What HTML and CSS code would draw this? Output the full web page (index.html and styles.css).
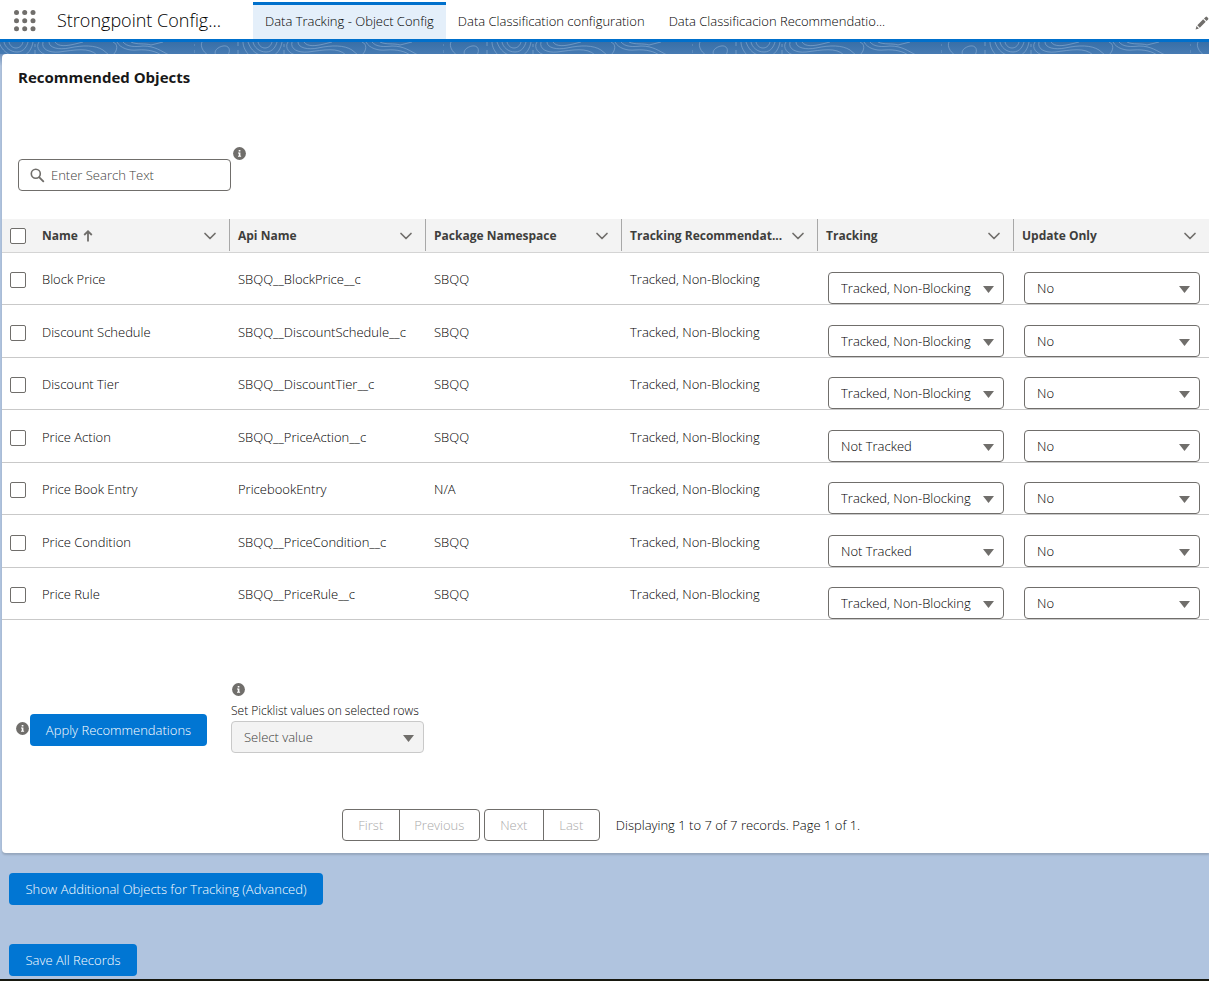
FILE: index.html
```html
<!DOCTYPE html>
<html lang="en">
<head>
<meta charset="utf-8">
<title>Strongpoint Configuration</title>
<link rel="stylesheet" href="styles.css">
</head>
<body>
<svg class="defs" aria-hidden="true">
  <symbol id="info" viewBox="0 0 13 13"><circle cx="6.500" cy="6.500" r="6.400" fill="#706e6b"/><path d="M5.700 3h1.700v1.500H5.700zM5 5.500h2.400v3.300h.7v1H5v-1h.8V6.400H5z" fill="#fff"/></symbol>
  <symbol id="chevron" viewBox="0 0 14 14"><path d="M2 4.500l5 5 5-5" fill="none" stroke="#706e6b" stroke-width="1.700" stroke-linecap="round" stroke-linejoin="round"/></symbol>
</svg>
<header class="topbar">
  <button class="launcher" type="button" aria-label="App Launcher">
    <svg width="22" height="22" viewBox="0 0 22 22" fill="#706e6b"><circle cx="2.500" cy="2.500" r="2.500"/><circle cx="10.700" cy="2.500" r="2.500"/><circle cx="19" cy="2.500" r="2.500"/><circle cx="2.500" cy="10.700" r="2.500"/><circle cx="10.700" cy="10.700" r="2.500"/><circle cx="19" cy="10.700" r="2.500"/><circle cx="2.500" cy="18.700" r="2.500"/><circle cx="10.700" cy="18.700" r="2.500"/><circle cx="19" cy="18.700" r="2.500"/></svg>
  </button>
  <div class="app-name">Strongpoint Config...</div>
  <nav class="tabs">
    <a class="tab active" href="#">Data Tracking - Object Config</a>
    <a class="tab" href="#">Data Classification configuration</a>
    <a class="tab" href="#">Data Classificacion Recommendatio...</a>
  </nav>
  <button class="edit" type="button" aria-label="Edit navigation">
    <svg width="14" height="14" viewBox="0 0 14 14" fill="#706e6b"><path d="M.6 13.400l.9-3.300 2.400 2.400zM2.300 9.200l5.900-5.900 2.500 2.500-5.900 5.900zM9 2.500l1.600-1.600q.7-.6 1.400 0l1.100 1.100q.6.700 0 1.400L11.500 5z"/></svg>
  </button>
</header>
<svg class="band" aria-hidden="true">
  <defs>
    <pattern id="contours" width="249" height="13" patternUnits="userSpaceOnUse" x="194">
      <g fill="none" stroke="#86abd3" stroke-width="1" stroke-opacity=".65">
        <path d="M8 0C6 4 9 10 14 13M22 13C19 9 24 5 29 4c6-1 8 4 5 9M0 2v2M0 8v3M44 0v4M44 8v5M49 0c0 5 3 10 6 13M54 0c2 6 6 11 12 13M59 0c1 5 6 10 13 10S82 4 83 0M64 0c2 8 12 8 14 0M88 0c-1 6-4 11-8 13M90 2v3M90 8v4"/>
        <path d="M94 0c-4 6 2 12 8 13M98 0c-2 7 6 11 16 10 16-2 30-5 38 3M104 0c0 6 10 8 20 6 14-3 26-3 34 2l6 5M110 0c3 5 12 4 20 2l8-2M168 0c5 2 5 8 0 13M172 0c3 6 12 9 20 8 12-1 20 2 24 5M178 0c4 5 12 5 20 4 12 0 18 5 26 9M186 0c6 3 14 1 20 3l12-3"/>
      </g>
    </pattern>
    <linearGradient id="sky" x1="0" y1="0" x2="0" y2="1"><stop offset="0" stop-color="#386fa7"/><stop offset="1" stop-color="#477bb3"/></linearGradient>
  </defs>
  <rect width="100%" height="100%" fill="url(#sky)"/>
  <rect width="100%" height="100%" fill="url(#contours)"/>
</svg>
<main class="page">
  <section class="card">
    <h1 class="card-title">Recommended Objects</h1>
    <div class="search-row">
      <label class="search">
        <svg width="15" height="15" viewBox="0 0 15 15" fill="none" stroke="#706e6b"><circle cx="5.800" cy="5.800" r="4.500" stroke-width="1.600"/><path d="M9.300 9.300l4 4" stroke-width="1.900" stroke-linecap="round"/></svg>
        <input type="text" placeholder="Enter Search Text" aria-label="Search">
      </label>
      <svg class="info"><use href="#info"/></svg>
    </div>
    <table class="grid">
      <colgroup><col class="col-check"><col><col><col><col><col><col></colgroup>
      <thead>
        <tr>
          <th><input class="check" type="checkbox" aria-label="Select all"></th>
          <th><div class="head"><span>Name</span><svg class="sort" viewBox="0 0 10 12"><path d="M5 11.500V1.500M1.200 5L5 1.300 8.800 5" fill="none" stroke="#706e6b" stroke-width="1.800"/></svg><svg class="chev"><use href="#chevron"/></svg></div></th>
          <th><div class="head"><span>Api Name</span><svg class="chev"><use href="#chevron"/></svg></div></th>
          <th><div class="head"><span>Package Namespace</span><svg class="chev"><use href="#chevron"/></svg></div></th>
          <th><div class="head"><span>Tracking Recommendat...</span><svg class="chev"><use href="#chevron"/></svg></div></th>
          <th><div class="head"><span>Tracking</span><svg class="chev"><use href="#chevron"/></svg></div></th>
          <th><div class="head"><span>Update Only</span><svg class="chev"><use href="#chevron"/></svg></div></th>
        </tr>
      </thead>
      <tbody>
        <tr><td><input class="check" type="checkbox" aria-label="Select Block Price"></td><td>Block Price</td><td>SBQQ__BlockPrice__c</td><td>SBQQ</td><td>Tracked, Non-Blocking</td><td class="pick"><div class="select"><select aria-label="Tracking"><option>Tracked, Non-Blocking</option></select></div></td><td class="pick"><div class="select"><select aria-label="Update Only"><option>No</option></select></div></td></tr>
        <tr><td><input class="check" type="checkbox" aria-label="Select Discount Schedule"></td><td>Discount Schedule</td><td>SBQQ__DiscountSchedule__c</td><td>SBQQ</td><td>Tracked, Non-Blocking</td><td class="pick"><div class="select"><select aria-label="Tracking"><option>Tracked, Non-Blocking</option></select></div></td><td class="pick"><div class="select"><select aria-label="Update Only"><option>No</option></select></div></td></tr>
        <tr><td><input class="check" type="checkbox" aria-label="Select Discount Tier"></td><td>Discount Tier</td><td>SBQQ__DiscountTier__c</td><td>SBQQ</td><td>Tracked, Non-Blocking</td><td class="pick"><div class="select"><select aria-label="Tracking"><option>Tracked, Non-Blocking</option></select></div></td><td class="pick"><div class="select"><select aria-label="Update Only"><option>No</option></select></div></td></tr>
        <tr><td><input class="check" type="checkbox" aria-label="Select Price Action"></td><td>Price Action</td><td>SBQQ__PriceAction__c</td><td>SBQQ</td><td>Tracked, Non-Blocking</td><td class="pick"><div class="select"><select aria-label="Tracking"><option>Not Tracked</option></select></div></td><td class="pick"><div class="select"><select aria-label="Update Only"><option>No</option></select></div></td></tr>
        <tr><td><input class="check" type="checkbox" aria-label="Select Price Book Entry"></td><td>Price Book Entry</td><td>PricebookEntry</td><td>N/A</td><td>Tracked, Non-Blocking</td><td class="pick"><div class="select"><select aria-label="Tracking"><option>Tracked, Non-Blocking</option></select></div></td><td class="pick"><div class="select"><select aria-label="Update Only"><option>No</option></select></div></td></tr>
        <tr><td><input class="check" type="checkbox" aria-label="Select Price Condition"></td><td>Price Condition</td><td>SBQQ__PriceCondition__c</td><td>SBQQ</td><td>Tracked, Non-Blocking</td><td class="pick"><div class="select"><select aria-label="Tracking"><option>Not Tracked</option></select></div></td><td class="pick"><div class="select"><select aria-label="Update Only"><option>No</option></select></div></td></tr>
        <tr><td><input class="check" type="checkbox" aria-label="Select Price Rule"></td><td>Price Rule</td><td>SBQQ__PriceRule__c</td><td>SBQQ</td><td>Tracked, Non-Blocking</td><td class="pick"><div class="select"><select aria-label="Tracking"><option>Tracked, Non-Blocking</option></select></div></td><td class="pick"><div class="select"><select aria-label="Update Only"><option>No</option></select></div></td></tr>
      </tbody>
    </table>
    <div class="actions">
      <div class="apply">
        <svg class="info"><use href="#info"/></svg>
        <button class="btn apply-btn" type="button">Apply Recommendations</button>
      </div>
      <div class="bulk">
        <svg class="info"><use href="#info"/></svg>
        <label for="bulk">Set Picklist values on selected rows</label>
        <div class="select"><select id="bulk" disabled><option>Select value</option></select></div>
      </div>
    </div>
    <div class="pager">
      <div class="group"><button class="first" type="button" disabled>First</button><button class="previous" type="button" disabled>Previous</button></div>
      <div class="group"><button class="next" type="button" disabled>Next</button><button class="last" type="button" disabled>Last</button></div>
      <span class="status">Displaying 1 to 7 of 7 records. Page 1 of 1.</span>
    </div>
  </section>
  <div class="footer">
    <button class="btn show-btn" type="button">Show Additional Objects for Tracking (Advanced)</button>
    <button class="btn save-btn" type="button">Save All Records</button>
  </div>
</main>
<div class="ground"></div>
</body>
</html>
```
FILE: styles.css
```css
* { box-sizing: border-box; }
body {
  margin: 0;
  background: #b0c4df;
  color: #000;
  font: 300 13px/20px "Open Sans", "Noto Sans", sans-serif;
  overflow-x: hidden;
}
button, input, select { font: inherit; color: inherit; margin: 0; }
svg { display: block; flex: none; }
.defs { position: absolute; width: 0; height: 0; }

.topbar {
  display: flex;
  align-items: stretch;
  height: 42px;
  background: #fff;
  border-bottom: 3px solid #0070cc;
}
.launcher, .edit { border: 0; background: none; padding: 0; display: flex; align-items: center; }
.launcher { padding: 2px 0 0 14px; }
.app-name {
  width: 217px;
  padding: 0 0 0 21px;
  font-size: 18px;
  line-height: 41px;
  white-space: nowrap;
}
.tabs { display: flex; flex: 1; }
.tab {
  padding: 0 12px;
  margin-top: 2px;
  border-top: 3px solid transparent;
  color: #000;
  line-height: 33px;
  text-decoration: none;
  white-space: nowrap;
}
.tab.active { background: #e4effa; border-color: #0070cc; }
.edit { padding-top: 6px; }

.band { width: 100%; height: 12px; }

.page { padding-left: 2px; background: linear-gradient(#6f92be, #b0c4df 12px); }
.card {
  display: flex;
  flex-direction: column;
  background: #fff;
  border-radius: 4px 0 0 4px;
  box-shadow: 0 2px 2px rgba(0, 0, 0, .15);
  padding-bottom: 12px;
}
.card-title {
  margin: 0;
  padding: 11px 16px 13px;
  color: #181818;
  font-size: 15px;
  line-height: 24px;
  font-weight: 700;
}
.search-row { display: flex; gap: 2px; padding: 45px 16px 28px; }
.search {
  display: flex;
  align-items: center;
  gap: 6px;
  width: 213px;
  height: 32px;
  margin-top: 12px;
  padding: 0 11px;
  border: 1px solid #706e6b;
  border-radius: 4px;
}
.search input { flex: 1; min-width: 0; border: 0; padding: 0; background: none; outline: 0; }
.search input::placeholder { color: #3e3e3c; opacity: 1; }
.info { width: 13px; height: 13px; }

.grid { width: calc(100% + 1px); table-layout: fixed; border-collapse: separate; border-spacing: 0; }
.col-check { width: 32px; }
.grid th { height: 34px; padding: 0 8px; background: #f3f3f3; border-bottom: 1px solid #d4d4d4; color: #3e3e3c; font-size: 12px; font-weight: 700; text-align: left; }
.grid th .head { display: flex; align-items: center; height: 32px; }
.grid th:not(:first-child):not(:last-child) { background: linear-gradient(#a8a8a8, #a8a8a8) right top / 1px 32px no-repeat #f3f3f3; }
.head span { white-space: nowrap; }
.sort { width: 10px; height: 12px; margin-left: 5px; }
.chev { width: 14px; height: 14px; margin-left: auto; }
.grid th .chev { margin-right: 5px; }
.grid td { height: 52px; padding: 1px 8px 0; border-bottom: 1px solid #c9c9c9; white-space: nowrap; }
.grid tr:nth-child(even) td { height: 53px; }
.grid td.pick { padding: 0 10px; vertical-align: bottom; }
.check {
  appearance: none;
  display: block;
  width: 16px;
  height: 16px;
  border: 1px solid #706e6b;
  border-radius: 2px;
  background: #fff;
}
.grid td .check { margin-top: 2px; }

.select { display: grid; align-items: center; }
.select > select, .select::after { grid-area: 1 / 1; }
.select > select {
  appearance: none;
  width: 100%;
  height: 32px;
  padding: 0 30px 0 12px;
  border: 1px solid #706e6b;
  border-radius: 4px;
  background: #fff;
}
.select::after {
  content: "";
  justify-self: end;
  width: 11px;
  height: 7px;
  margin: 3px 10px 0 0;
  background: #706e6b;
  clip-path: polygon(0 0, 100% 0, 50% 100%);
  pointer-events: none;
}
.select > select:disabled { background: #f3f3f3; border-color: #c9c9c9; color: #3e3e3c; opacity: 1; }

.actions { display: flex; gap: 24px; padding: 62px 14px 0; }
.apply { display: flex; align-items: center; gap: 1px; height: 32px; margin-top: 32px; }
.apply .info { margin-bottom: 4px; }
.bulk { width: 193px; }
.bulk .info { margin: 1px 0 5px 1px; }
.bulk label { display: block; font-size: 12px; white-space: nowrap; }
.btn {
  height: 32px;
  padding: 0;
  border: 0;
  border-radius: 4px;
  background: #0176d3;
  color: #fff;
  white-space: nowrap;
}
.apply-btn { width: 177px; }
.show-btn { width: 314px; }
.save-btn { width: 128px; }

.pager { display: flex; justify-content: center; gap: 4px; padding: 56px 9px 0 0; }
.group { display: flex; border: 1px solid #706e6b; border-radius: 4px; height: 32px; }
.group button { border: 0; background: none; padding: 0; color: #aaa; }
.group button + button { border-left: 1px solid #706e6b; }
.first, .last { width: 56px; }
.previous { width: 80px; }
.next { width: 58px; }
.status { padding-left: 12px; line-height: 32px; }

.footer { display: flex; flex-direction: column; align-items: flex-start; gap: 39px; padding: 20px 7px 3px; }
.ground { height: 2px; background: #17180f; }
```
